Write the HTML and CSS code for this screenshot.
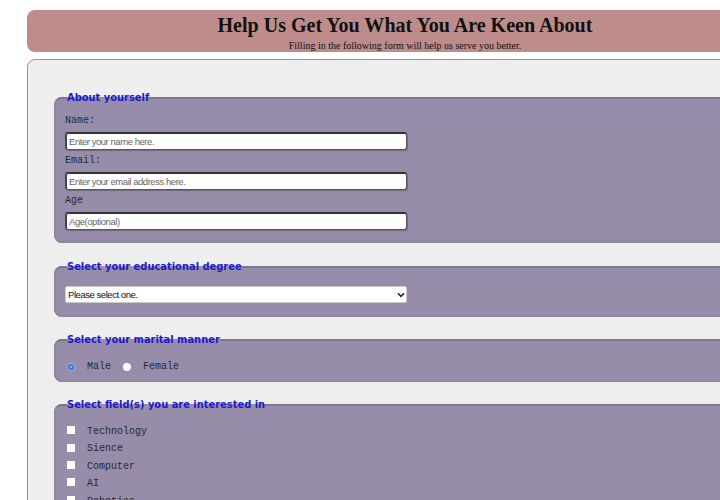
FILE: index.html
```html
<!DOCTYPE html>
<html>
<head>
<meta charset="utf-8">
<link rel="stylesheet" href="styles.css">
</head>
<body>
<div class="page">
  <header class="hero">
    <h1 class="title"><span class="title-text">Help Us Get You What You Are Keen About</span></h1>
    <p class="subtitle">Filling in the following form will help us serve you better.</p>
  </header>
  <form class="survey">
    <fieldset class="group group-about">
      <legend class="legend">About yourself</legend>
      <div class="stack">
        <label class="label" for="name">Name:</label>
        <input class="field" id="name" type="text" placeholder="Enter your name here.">
        <label class="label" for="email">Email:</label>
        <input class="field" id="email" type="text" placeholder="Enter your email address here.">
        <label class="label" for="age">Age</label>
        <input class="field" id="age" type="text" placeholder="Age(optional)">
      </div>
    </fieldset>
    <fieldset class="group group-select">
      <legend class="legend">Select your educational degree</legend>
      <div class="select-wrap">
        <select class="choose">
          <option>Please select one.</option>
        </select>
        <svg class="chev" width="8" height="6" viewBox="0 0 8 6"><path d="M1 1.2 L4 4.4 L7 1.2" fill="none" stroke="#222" stroke-width="1.6"/></svg>
      </div>
    </fieldset>
    <fieldset class="group group-radio">
      <legend class="legend">Select your marital manner</legend>
      <div class="radio-row">
        <span class="radio checked"></span><span class="opt">Male</span>
        <span class="radio"></span><span class="opt">Female</span>
      </div>
    </fieldset>
    <fieldset class="group group-checks">
      <legend class="legend">Select field(s) you are interested in</legend>
      <div class="checks">
        <div class="check-row"><span class="box"></span><span class="opt">Technology</span></div>
        <div class="check-row"><span class="box"></span><span class="opt">Sience</span></div>
        <div class="check-row"><span class="box"></span><span class="opt">Computer</span></div>
        <div class="check-row"><span class="box"></span><span class="opt">AI</span></div>
        <div class="check-row"><span class="box"></span><span class="opt">Robotics</span></div>
        <div class="check-row"><span class="box"></span><span class="opt">Design</span></div>
      </div>
    </fieldset>
  </form>
</div>
</body>
</html>
```
FILE: styles.css
```css
html, body {
  margin: 0;
  padding: 0;
  overflow: hidden;
  background: #ffffff;
}
.page {
  padding: 10px 0 0 27px;
  width: 756px;
}
.hero {
  background: #bf8c8c;
  height: 42px;
  border-radius: 8px 0 0 8px;
  text-align: center;
  color: #111;
  font-family: "Liberation Serif", serif;
}
.title {
  margin: 0;
  padding-top: 2px;
  font-size: 22px;
  line-height: 26px;
  font-weight: bold;
}
.title-text {
  display: inline-block;
  transform: scaleX(0.91);
}
.subtitle {
  margin: 0;
  padding-top: 2px;
  font-size: 10px;
  line-height: 12px;
}
.survey {
  margin-top: 7px;
  background: #eeeeee;
  border: 1px solid #d27a7a;
  border-radius: 8px 0 0 0;
  padding: 31px 0 40px 26px;
  height: 600px;
}
.group {
  margin: 0 0 16px 0;
  background: #978ca9;
  border: 2px solid #8f879c;
  border-top-color: #7d7788;
  border-radius: 8px 0 0 8px;
  padding: 9px 9px 11px 9px;
}
.group-about {
  margin-bottom: 17px;
}
.legend {
  font-family: "DejaVu Sans", sans-serif;
  font-stretch: condensed;
  font-weight: bold;
  font-size: 11px;
  line-height: 14px;
  color: #1c1cc8;
  padding: 0;
  margin-left: 2px;
}
.stack {
  display: flex;
  flex-direction: column;
  gap: 4px;
}
.label, .opt {
  font-family: "Liberation Mono", monospace;
  font-size: 10px;
  line-height: 14px;
  color: #2a2a2a;
}
.field {
  box-sizing: border-box;
  width: 342px;
  height: 18px;
  margin: 0;
  padding: 0 2px;
  background: #fff;
  border: 1px solid #555;
  border-top: 2px solid #333;
  border-left: 2px solid #444;
  border-radius: 3px;
  box-shadow: 1px 1px 1px rgba(0, 0, 0, 0.25);
  font-family: "Liberation Sans", sans-serif;
  font-size: 9.5px;
  letter-spacing: -0.45px;
  color: #222;
  outline: none;
}
.field::placeholder {
  color: #666;
}
.group-select {
  padding-top: 12px;
  padding-bottom: 12px;
}
.select-wrap {
  position: relative;
  width: 342px;
}
.choose {
  appearance: none;
  -webkit-appearance: none;
  box-sizing: border-box;
  display: block;
  width: 342px;
  height: 17px;
  margin: 0;
  padding: 0 2px;
  background: #fff;
  border: 1px solid #c8c8c8;
  border-radius: 2px;
  font-family: "Liberation Sans", sans-serif;
  font-size: 9.5px;
  letter-spacing: -0.45px;
  color: #111;
}
.chev {
  position: absolute;
  right: 2px;
  top: 6px;
}
.group-radio {
  padding-top: 12px;
  padding-bottom: 5px;
}
.radio-row {
  display: flex;
  align-items: center;
  height: 16px;
  padding-left: 2px;
}
.radio {
  box-sizing: border-box;
  width: 8px;
  height: 8px;
  border-radius: 50%;
  background: #fff;
  margin-right: 12px;
}
.radio.checked {
  background: radial-gradient(circle, #7fb0f0 0 1.2px, #1f6fe0 1.8px);
  border: 1px solid #8ab8f2;
}
.radio-row .opt + .radio {
  margin-left: 12px;
}
.group-checks {
  padding-top: 11px;
}
.checks {
  display: flex;
  flex-direction: column;
  padding-left: 2px;
}
.check-row {
  display: flex;
  align-items: center;
  height: 17.4px;
}
.box {
  width: 8px;
  height: 8px;
  background: #fff;
  margin-right: 12px;
  margin-top: -3px;
}
.check-row .opt {
  line-height: 17.4px;
}
```
